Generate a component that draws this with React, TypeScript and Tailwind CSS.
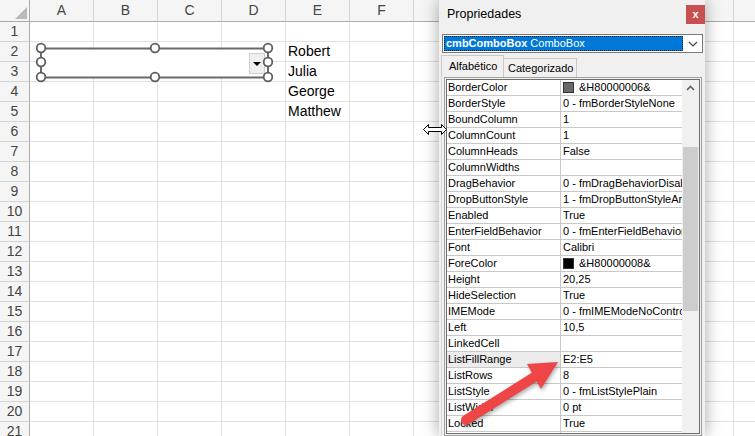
import React from "react";

const COLS = ["A", "B", "C", "D", "E", "F", "G", "H", "I", "J", "K", "L"];
// columns G onwards lie under the floating properties window or past the edge
const SHOWN = ["A", "B", "C", "D", "E", "F"];
const ROWS = Array.from({ length: 21 }, (_, i) => i + 1);
const NAMES: Record<number, string> = { 2: "Robert", 3: "Julia", 4: "George", 5: "Matthew" };

type Prop = { name: string; value: string; swatch?: string; selected?: boolean };

const PROPS: Prop[] = [
  { name: "BorderColor", value: "&H80000006&", swatch: "#696969" },
  { name: "BorderStyle", value: "0 - fmBorderStyleNone" },
  { name: "BoundColumn", value: "1" },
  { name: "ColumnCount", value: "1" },
  { name: "ColumnHeads", value: "False" },
  { name: "ColumnWidths", value: "" },
  { name: "DragBehavior", value: "0 - fmDragBehaviorDisabled" },
  { name: "DropButtonStyle", value: "1 - fmDropButtonStyleArrow" },
  { name: "Enabled", value: "True" },
  { name: "EnterFieldBehavior", value: "0 - fmEnterFieldBehaviorSelectAll" },
  { name: "Font", value: "Calibri" },
  { name: "ForeColor", value: "&H80000008&", swatch: "#000000" },
  { name: "Height", value: "20,25" },
  { name: "HideSelection", value: "True" },
  { name: "IMEMode", value: "0 - fmIMEModeNoControl" },
  { name: "Left", value: "10,5" },
  { name: "LinkedCell", value: "" },
  { name: "ListFillRange", value: "E2:E5", selected: true },
  { name: "ListRows", value: "8" },
  { name: "ListStyle", value: "0 - fmListStylePlain" },
  { name: "ListWidth", value: "0 pt" },
  { name: "Locked", value: "True" },
  { name: "MatchEntry", value: "1 - fmMatchEntryComplete" },
];

function Sheet() {
  return (
    <div className="flex flex-col">
      <div className="flex h-[22px]">
        <div className="relative w-[30px] shrink-0 border-r border-b border-[#ababab] bg-[#f5f5f5]">
          <div className="absolute right-[2px] bottom-[2px] w-0 h-0 border-b-[12px] border-l-[12px] border-b-[#b9b9b9] border-l-transparent" />
        </div>
        {COLS.map((c) => (
          <div
            key={c}
            className="w-[64px] shrink-0 border-r border-r-[#d4d4d4] border-b border-b-[#ababab] bg-[#f5f5f5] flex items-center justify-center text-[14px] text-[#444]"
          >
            {SHOWN.includes(c) ? c : null}
          </div>
        ))}
      </div>
      {ROWS.map((r) => (
        <div key={r} className="flex h-[20px]">
          <div className="w-[30px] shrink-0 border-r border-r-[#ababab] border-b border-b-[#d4d4d4] bg-[#f5f5f5] text-center text-[14px] leading-[19px] text-[#444]">
            {r}
          </div>
          {COLS.map((c) => (
            <div key={c} className="w-[64px] shrink-0 border-r border-b border-[#e1e1e1] pl-[2px] text-[14px] leading-[19px] text-black">
              {c === "E" ? NAMES[r] : null}
            </div>
          ))}
        </div>
      ))}
    </div>
  );
}

function SheetCombo() {
  const handles = [
    [6, 6], [120, 6], [233, 6],
    [6, 20], [233, 20],
    [6, 35], [120, 35], [233, 35],
  ];
  return (
    <div className="absolute left-[35px] top-[42px] w-[240px] h-[42px]">
      <div className="absolute left-[7px] top-[8px] w-[226px] h-[27px] bg-white flex justify-end items-center pr-[3px]">
        <div className="w-[16px] h-[21px] bg-[#efefef] border border-[#d0d0d0] flex items-center justify-center">
          <div className="w-0 h-0 border-l-[4px] border-r-[4px] border-t-[4px] border-l-transparent border-r-transparent border-t-black" />
        </div>
      </div>
      <svg className="absolute inset-0" width="240" height="42" viewBox="0 0 240 42">
        <rect x="6" y="6.5" width="227" height="29" fill="none" stroke="#6a6a6a" strokeWidth="2" />
        {handles.map(([x, y], i) => (
          <circle key={i} cx={x} cy={y} r="4.3" fill="white" stroke="#5e5e5e" strokeWidth="1.8" />
        ))}
      </svg>
    </div>
  );
}

function PropRow({ p }: { p: Prop }) {
  return (
    <div className="flex h-[16px] shrink-0 border-b border-[#c8c8c8] text-[11px] leading-[15px] text-black">
      <div className={`w-[114px] shrink-0 border-r border-[#c8c8c8] pl-[1px] overflow-hidden whitespace-nowrap ${p.selected ? "bg-[#ececec]" : "bg-white"}`}>
        {p.name}
      </div>
      <div className="flex-1 bg-white pl-[2px] overflow-hidden whitespace-nowrap flex items-center">
        {p.swatch && (
          <span className="inline-block w-[11px] h-[11px] border border-[#333] mr-[5px] shrink-0" style={{ backgroundColor: p.swatch }} />
        )}
        <span>{p.value}</span>
      </div>
    </div>
  );
}

function Properties() {
  return (
    <div className="absolute left-[439px] top-0 w-[266px] h-[436px] bg-[#f0f0f0] shadow-[0_0_16px_rgba(0,0,0,0.35)] flex flex-col font-['Liberation_Sans',Arial,sans-serif]">
      <div className="h-[34px] shrink-0 flex items-start justify-between">
        <span className="pl-[8px] pt-[5px] text-[12.5px] text-black">Propriedades</span>
        <div className="mt-[5px] w-[19px] h-[19px] bg-[#c75050] text-white text-[11px] font-bold leading-[18px] text-center">x</div>
      </div>
      <div className="ml-[3px] mr-[2px] h-[19px] shrink-0 bg-white border border-[#7a7a7a] flex items-center">
        <div className="ml-[1px] w-[239px] h-[15px] bg-[#0078d7] border border-dotted border-[#222] text-white text-[11px] leading-[13px] pl-[1px] whitespace-nowrap overflow-hidden">
          <span className="font-bold">cmbComboBox</span> ComboBox
        </div>
        <div className="flex-1 flex items-center justify-center">
          <svg width="10" height="6" viewBox="0 0 10 6">
            <path d="M1 1 L5 5 L9 1" fill="none" stroke="#444" strokeWidth="1.2" />
          </svg>
        </div>
      </div>
      <div className="mt-[2px] h-[22px] shrink-0 flex items-end pl-[2px] text-[11px] text-black">
        <div className="w-[63px] h-[22px] border border-b-0 border-[#c8c8c8] bg-[#f0f0f0] pl-[7px] leading-[20px]">Alfabético</div>
        <div className="w-[73px] h-[19px] border border-l-0 border-b-0 border-[#c8c8c8] bg-[#f0f0f0] pl-[4px] leading-[18px]">Categorizado</div>
      </div>
      <div className="flex-1 min-h-0 ml-[2px] border-l border-[#d9d9d9] pl-[2px] pr-[3px] flex flex-col">
        <div className="flex-1 min-h-0 border border-[#a0a0a0] p-[1px] bg-[#f0f0f0] flex flex-col">
          <div className="flex-1 min-h-0 border border-[#6e6e6e] flex overflow-hidden">
            <div className="flex-1 flex flex-col overflow-hidden">
              {PROPS.map((p) => (
                <PropRow key={p.name} p={p} />
              ))}
            </div>
            <div className="w-[17px] shrink-0 bg-[#f0f0f0] flex flex-col items-center">
              <div className="h-[16px] flex items-center justify-center">
                <svg width="9" height="6" viewBox="0 0 9 6">
                  <path d="M1 5 L4.5 1.5 L8 5" fill="none" stroke="#606060" strokeWidth="1.6" />
                </svg>
              </div>
              <div className="mt-[51px] w-[15px] h-[164px] bg-[#cdcdcd]" />
            </div>
          </div>
        </div>
      </div>
    </div>
  );
}

function RedArrow() {
  return (
    <svg
      className="absolute left-0 top-0 pointer-events-none drop-shadow-[1px_2px_2px_rgba(0,0,0,0.35)]"
      width="755"
      height="436"
      viewBox="0 0 755 436"
    >
      <line x1="466" y1="420" x2="536" y2="376" stroke="#ee4646" strokeWidth="10" strokeLinecap="round" />
      <polygon points="558,362 527,364 541,389" fill="#ee4646" />
    </svg>
  );
}

function ResizeCursor() {
  return (
    <svg className="absolute left-[423px] top-[124px]" width="24" height="11" viewBox="0 0 24 11">
      <path
        d="M0.5 5.5 L5.5 0.5 L5.5 3.5 L18.5 3.5 L18.5 0.5 L23.5 5.5 L18.5 10.5 L18.5 7.5 L5.5 7.5 L5.5 10.5 Z"
        fill="white"
        stroke="black"
        strokeWidth="1"
      />
    </svg>
  );
}

export default function App() {
  return (
    <div className="relative w-[755px] h-[436px] overflow-hidden bg-white font-['Liberation_Sans',Arial,sans-serif]">
      <Sheet />
      <SheetCombo />
      <Properties />
      <ResizeCursor />
      <RedArrow />
    </div>
  );
}
